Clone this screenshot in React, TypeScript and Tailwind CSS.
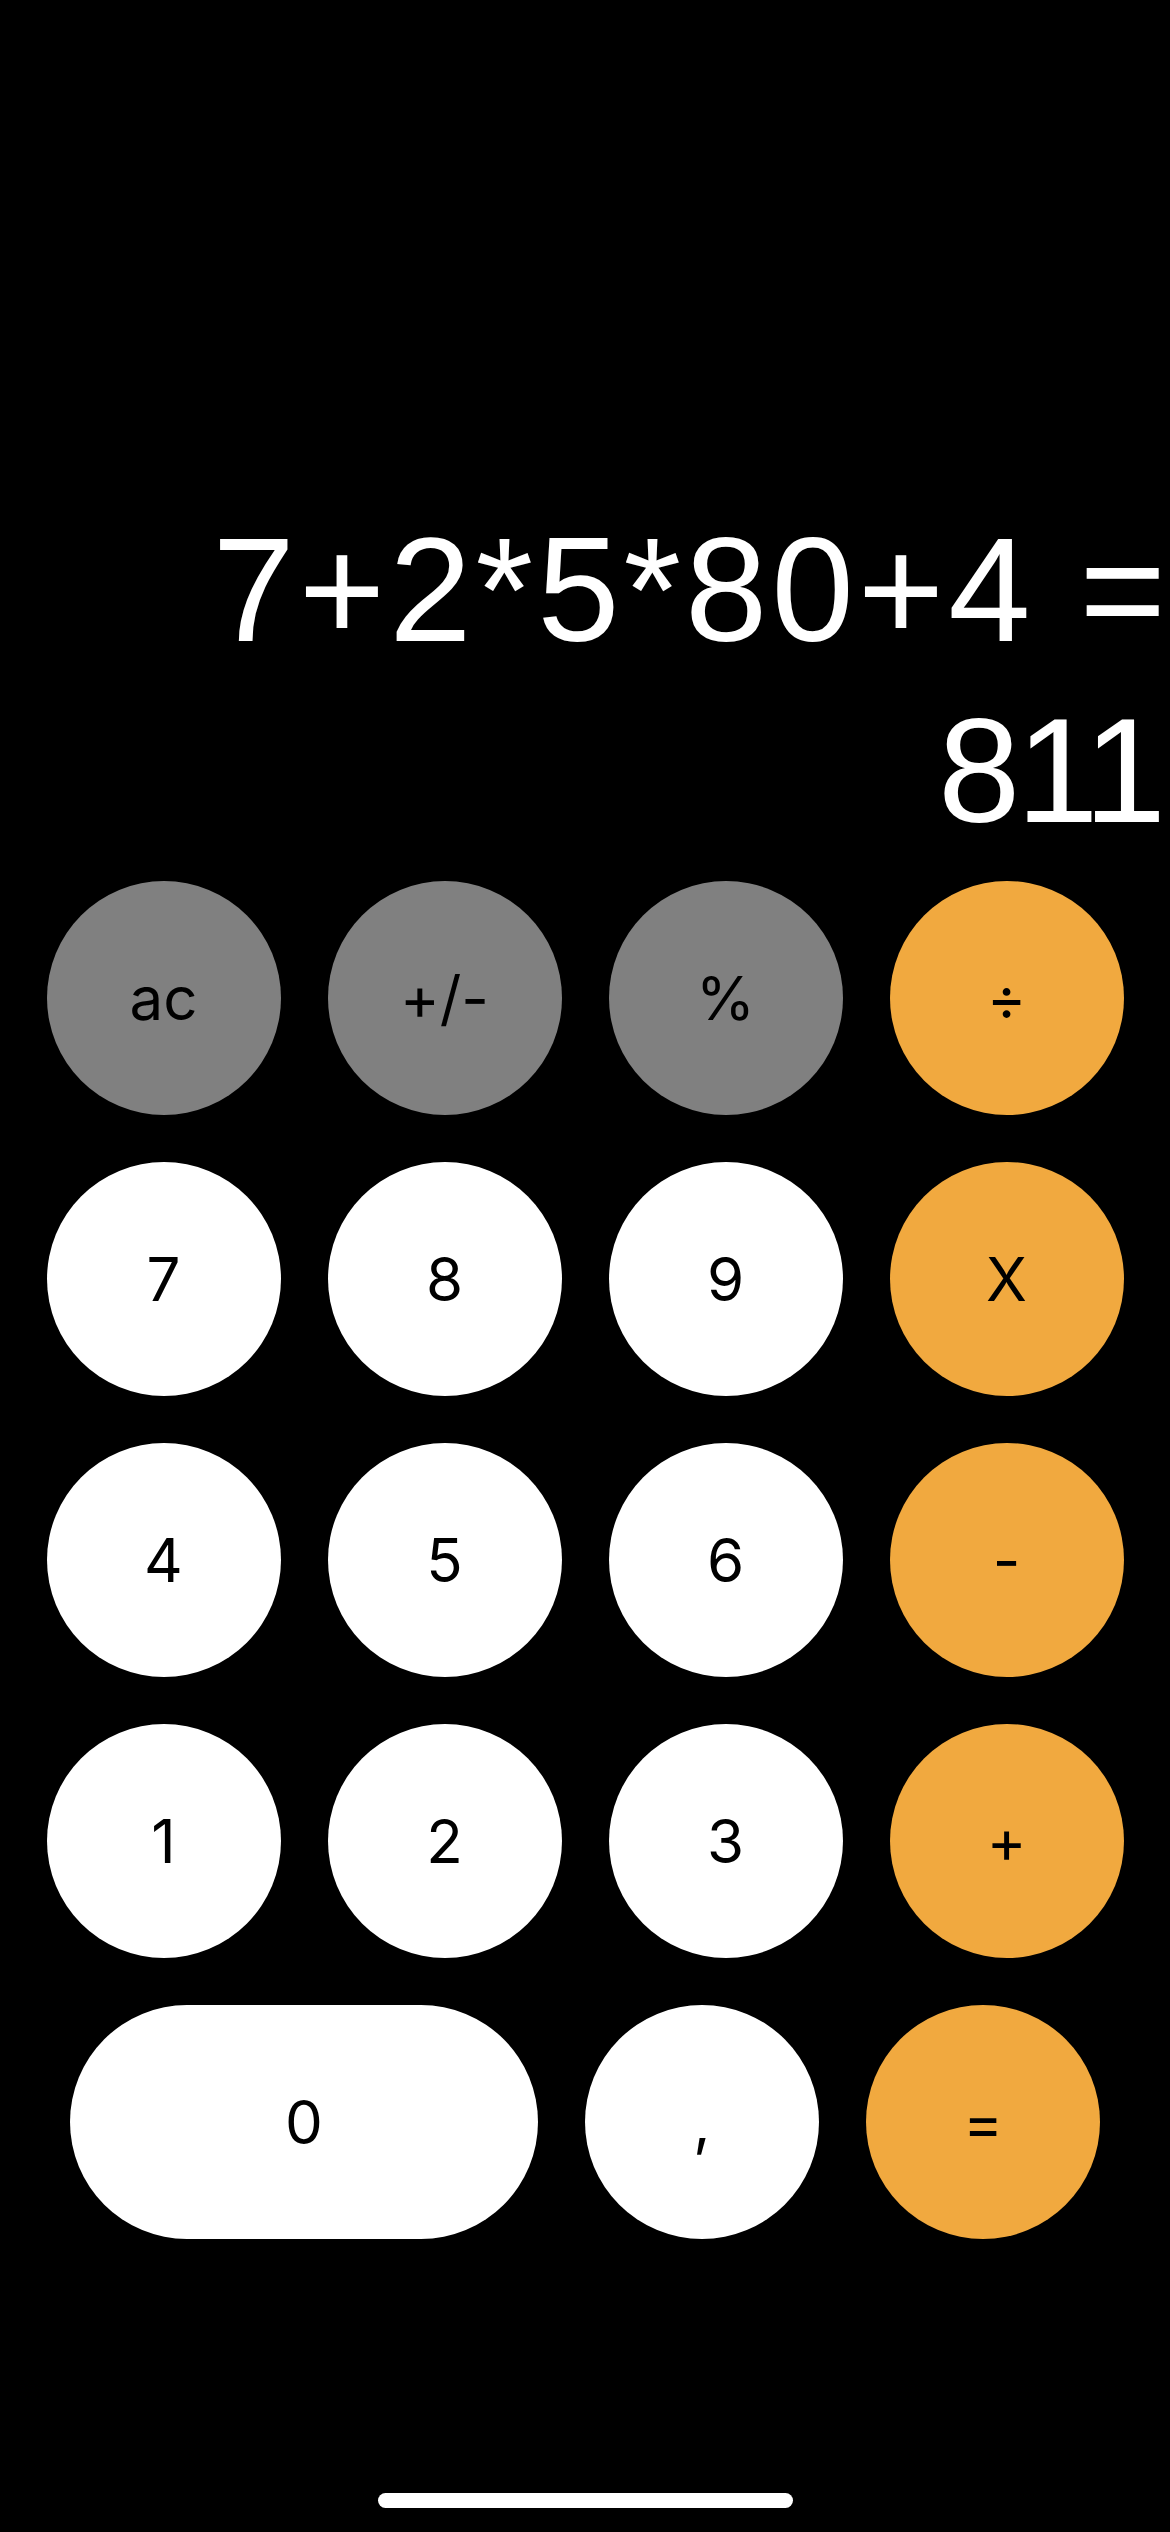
import React from "react";

type Key = {
  label: string;
  kind: "fn" | "num" | "op";
  wide?: boolean;
};

const rows: Key[][] = [
  [
    { label: "ac", kind: "fn" },
    { label: "+/-", kind: "fn" },
    { label: "%", kind: "fn" },
    { label: "÷", kind: "op" },
  ],
  [
    { label: "7", kind: "num" },
    { label: "8", kind: "num" },
    { label: "9", kind: "num" },
    { label: "X", kind: "op" },
  ],
  [
    { label: "4", kind: "num" },
    { label: "5", kind: "num" },
    { label: "6", kind: "num" },
    { label: "-", kind: "op" },
  ],
  [
    { label: "1", kind: "num" },
    { label: "2", kind: "num" },
    { label: "3", kind: "num" },
    { label: "+", kind: "op" },
  ],
  [
    { label: "0", kind: "num", wide: true },
    { label: ",", kind: "num" },
    { label: "=", kind: "op" },
  ],
];

const keyColor = {
  fn: "bg-[#808080]",
  num: "bg-white",
  op: "bg-[#f1a93f]",
};

function CalcKey({ k }: { k: Key }) {
  return (
    <button
      className={`${keyColor[k.kind]} ${
        k.wide ? "w-[468px]" : "w-[234px]"
      } h-[234px] rounded-full flex items-center justify-center text-black text-[60px] leading-none font-['Inter',sans-serif]`}
    >
      {k.label}
    </button>
  );
}

export default function App() {
  return (
    <div className="min-h-[2532px] w-full bg-black flex flex-col">
      {/* display */}
      <div className="pt-[499px] text-white text-right text-[148px] leading-[181px] whitespace-nowrap font-['Liberation_Sans',Arial,sans-serif]">
        <div className="tracking-[4px]">7+2*5*80+4 =</div>
        <div className="tracking-[-4px] pr-[8px]">811</div>
      </div>

      {/* keypad */}
      <div className="mt-[20px] flex flex-col gap-[47px]">
        {rows.map((row, i) => (
          <div key={i} className="flex justify-center gap-[47px]">
            {row.map((k) => (
              <CalcKey key={k.label} k={k} />
            ))}
          </div>
        ))}
      </div>

      <div className="mt-auto pb-[24px] flex justify-center">
        <div className="w-[415px] h-[15px] rounded-full bg-white" />
      </div>
    </div>
  );
}
